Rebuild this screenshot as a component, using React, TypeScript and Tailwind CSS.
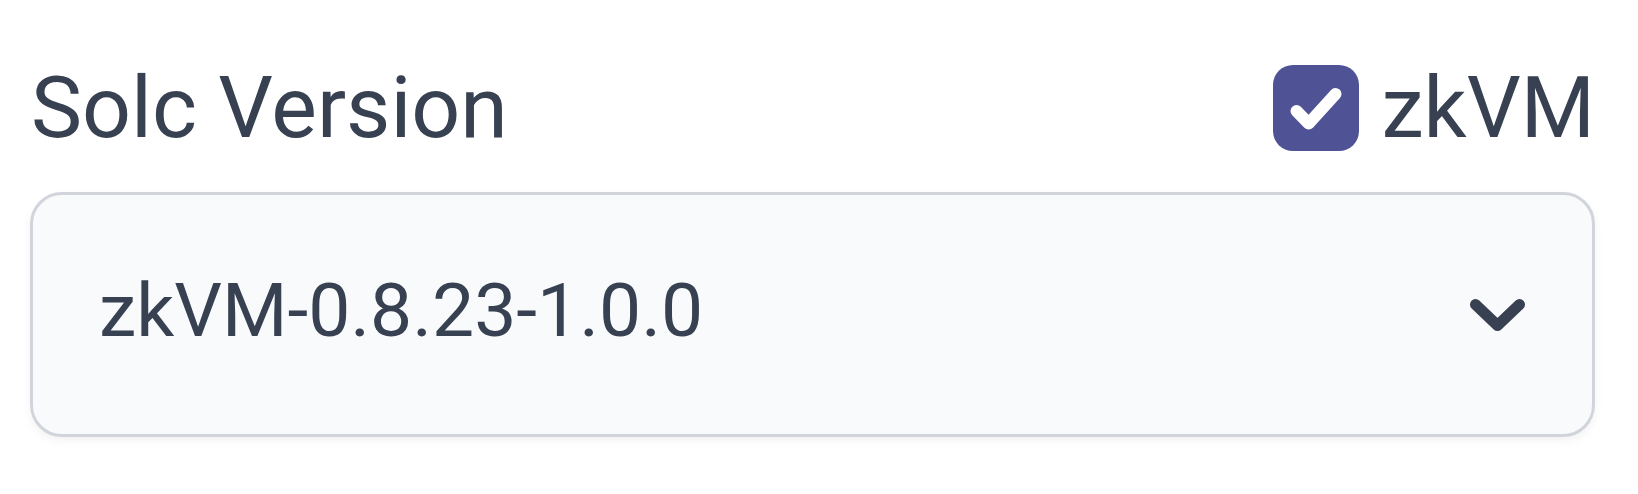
import { useState } from 'react';

const CheckIcon = () => (
	<svg width="86" height="86" viewBox="0 0 86 86" fill="none">
		<path d="M23.5 46L35.7 58.5L62.5 29" stroke="white" strokeWidth="12" strokeLinecap="round" strokeLinejoin="round"/>
	</svg>
);

const ChevronDown = () => (
	<svg width="55" height="32" viewBox="0 0 55 32" fill="none">
		<path d="M5.5 5.5L27.5 26.5L49.5 5.5" stroke="#374151" strokeWidth="11" strokeLinecap="round" strokeLinejoin="round"/>
	</svg>
);

export default function App() {
	const [zkvm, setZkvm] = useState(true);
	const [version]       = useState('zkVM-0.8.23-1.0.0');

	return (
		<div className="w-[1638px] h-[494px] bg-white font-['Roboto',sans-serif] text-[#374151]">
			<div className="w-[1565px] ml-[30px] pt-[58px] flex flex-col">
				<div className="flex items-center justify-between h-[100px]">
					<span className="ml-[1px] text-[86px] leading-[100px]">Solc Version</span>
					<label className="flex items-center gap-[22px] cursor-pointer" onClick={() => setZkvm(!zkvm)}>
						<span className={`w-[86px] h-[86px] rounded-[20px] flex items-center justify-center ${zkvm ? 'bg-[#4f5395]' : 'bg-white border-[3px] border-[#d1d5db]'}`}>
							{zkvm && <CheckIcon/>}
						</span>
						<span className="text-[85px] leading-[100px]">zkVM</span>
					</label>
				</div>
				<div className="mt-[34px] h-[245px] border-[3px] border-[#d1d5db] rounded-[32px] bg-[#f9fafb] shadow-[0_4px_10px_rgba(0,0,0,0.05)] flex items-center pl-[66px] pr-[67px]">
					<span className="text-[75px] leading-none pb-[9px] whitespace-nowrap">{version}</span>
					<span className="ml-auto flex"><ChevronDown/></span>
				</div>
			</div>
		</div>
	);
}
